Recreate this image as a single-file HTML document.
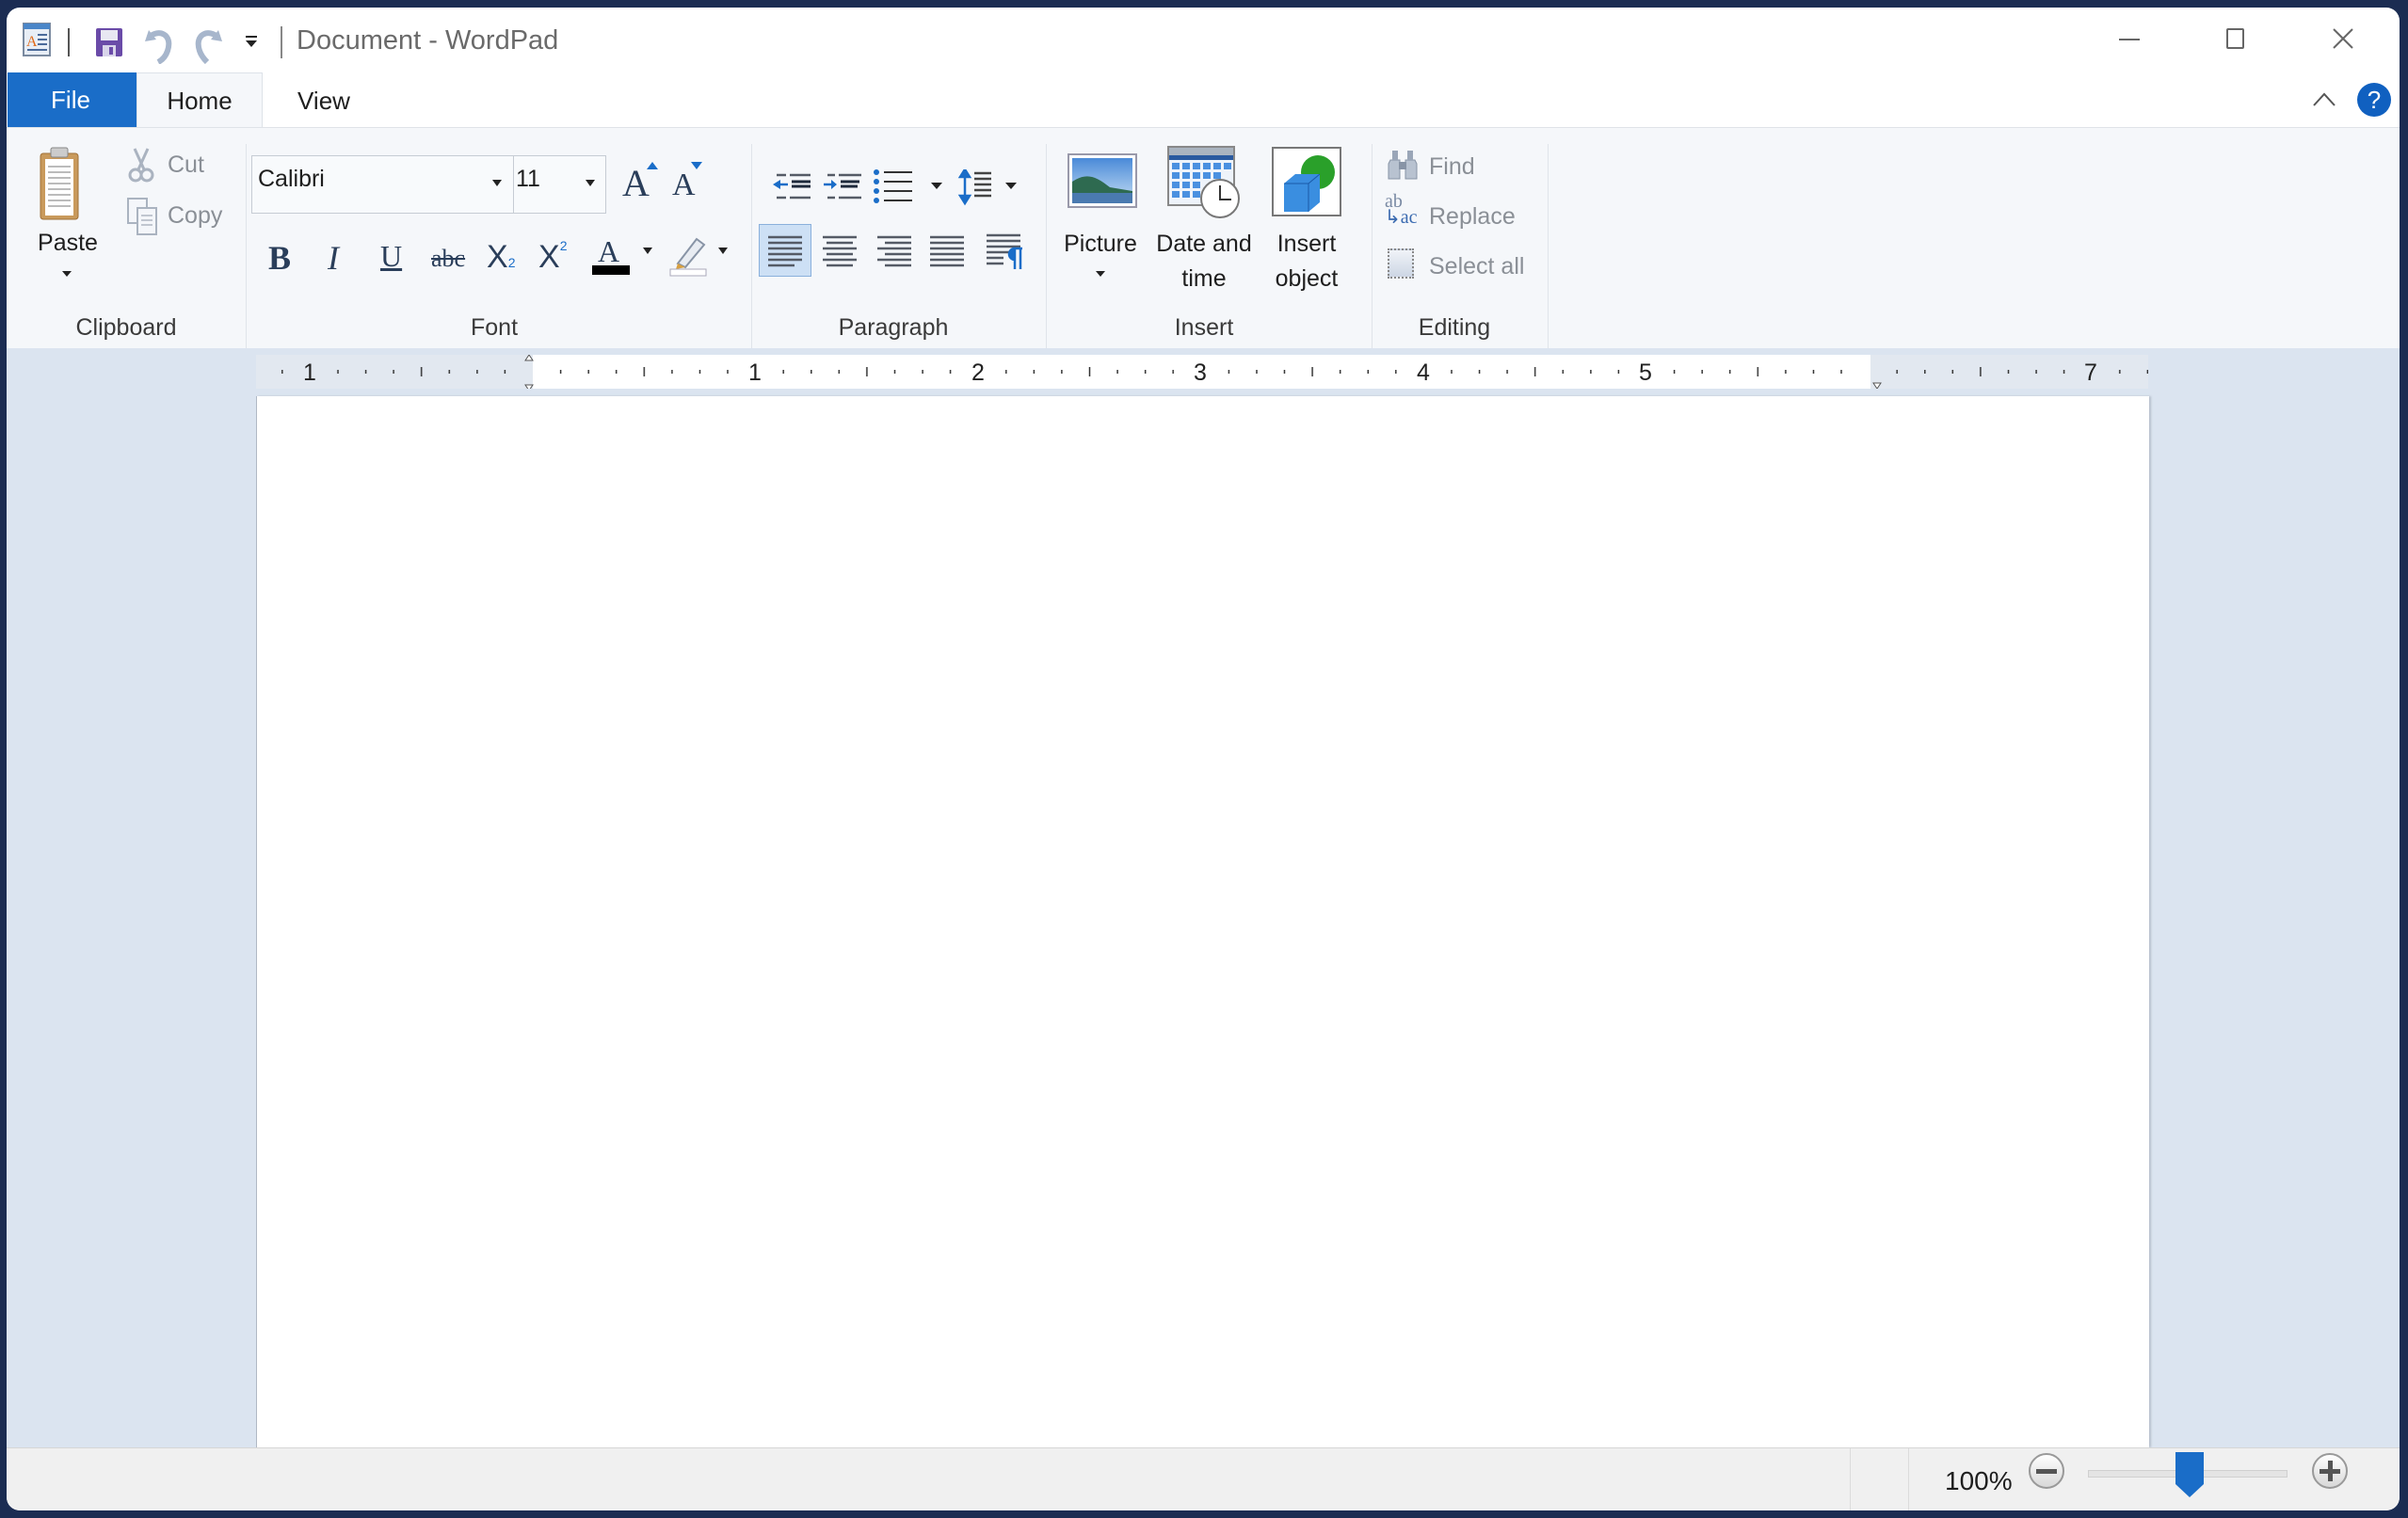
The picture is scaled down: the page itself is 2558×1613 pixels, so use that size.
<!DOCTYPE html>
<html><head><meta charset="utf-8"><style>
*{margin:0;padding:0;box-sizing:border-box}
body{width:2558px;height:1613px;background:#1b2c52;position:relative;overflow:hidden;font-family:"Liberation Sans",sans-serif;color:#1e1e1e}
.a{position:absolute}
.t{position:absolute;font-size:25px;white-space:nowrap;line-height:1}
.g{color:#8a8f96}
.lbl{position:absolute;font-size:25px;color:#3a3a3a;top:326px;transform:translateX(-50%);white-space:nowrap}
.sep{position:absolute;top:145px;width:1px;height:220px;background:#e0e4ea}
.dd{position:absolute;width:0;height:0;border-left:6px solid transparent;border-right:6px solid transparent;border-top:7px solid #222}
</style></head><body>
<div class="a" style="left:7px;top:8px;width:2542px;height:1597px;background:#fff;border-radius:14px;overflow:hidden">
<svg class="a" style="left:16px;top:15px" width="34" height="38" viewBox="0 0 34 38"><rect x="2" y="2" width="28" height="34" fill="#e8eef6" stroke="#7a8aa0" stroke-width="2"/><rect x="2" y="2" width="28" height="6" fill="#4a86c8"/><text x="5" y="26" font-size="16" fill="#e06a1a" font-family="Liberation Serif">A</text><path d="M17 14h10M17 19h10M17 24h10M6 30h21" stroke="#4a6a9a" stroke-width="2"/></svg>
<div class="a" style="left:65px;top:22px;width:2px;height:30px;background:#555"></div>
<svg class="a" style="left:94px;top:21px" width="30" height="32" viewBox="0 0 30 32"><rect x="1" y="1" width="28" height="30" rx="2" fill="#6a4ba8"/><rect x="6" y="3" width="18" height="11" fill="#e8e8f2"/><rect x="8" y="19" width="14" height="12" fill="#d8d4ea"/><rect x="15" y="21" width="4" height="8" fill="#6a4ba8"/></svg>
<svg class="a" style="left:143px;top:18px" width="36" height="42" viewBox="0 0 36 42"><path d="M8 6 L4 18 L16 16" fill="#a7b6cc"/><path d="M8 14 C18 4 34 10 28 28 C26 34 22 38 18 40" fill="none" stroke="#a7b6cc" stroke-width="6"/></svg>
<svg class="a" style="left:197px;top:18px" width="36" height="42" viewBox="0 0 36 42"><path d="M28 6 L32 18 L20 16" fill="#a7b6cc"/><path d="M28 14 C18 4 2 10 8 28 C10 34 14 38 16 40" fill="none" stroke="#a7b6cc" stroke-width="6"/></svg>
<div class="a" style="left:254px;top:30px;width:12px;height:2px;background:#222"></div>
<div class="dd" style="left:254px;top:35px"></div>
<div class="a" style="left:291px;top:20px;width:2px;height:34px;background:#888"></div>
<div class="t" style="left:308px;top:21px;font-size:29px;color:#6a6a6a">Document - WordPad</div>
<div class="a" style="left:2244px;top:33px;width:22px;height:2px;background:#666"></div>
<div class="a" style="left:2358px;top:22px;width:19px;height:22px;border:2px solid #666;border-radius:2px"></div>
<svg class="a" style="left:2470px;top:21px" width="24" height="24"><path d="M2 2L22 22M22 2L2 22" stroke="#666" stroke-width="2"/></svg>
<div class="a" style="left:1px;top:69px;width:137px;height:58px;background:#1a6dc8"></div>
<div class="t" style="left:68px;top:85px;color:#fff;font-size:26px;transform:translateX(-50%)">File</div>
<div class="a" style="left:138px;top:69px;width:134px;height:60px;background:#f5f7fa;border:1px solid #dde2e8;border-bottom:none"></div>
<div class="t" style="left:205px;top:86px;font-size:26px;transform:translateX(-50%)">Home</div>
<div class="t" style="left:337px;top:86px;font-size:26px;transform:translateX(-50%)">View</div>
<svg class="a" style="left:2449px;top:88px" width="26" height="18"><path d="M2 16L13 4L24 16" fill="none" stroke="#555" stroke-width="2"/></svg>
<div class="a" style="left:2497px;top:80px;width:36px;height:36px;border-radius:50%;background:#1060c0;color:#fff;font-size:26px;text-align:center;line-height:36px">?</div>
<div class="a" style="left:0;top:127px;width:2542px;height:236px;background:#f5f7fa;border-top:1px solid #dfe3e8"></div>
<div class="sep" style="left:254px"></div><div class="sep" style="left:791px"></div><div class="sep" style="left:1104px"></div><div class="sep" style="left:1450px"></div><div class="sep" style="left:1637px"></div>
<svg class="a" style="left:34px;top:147px" width="44" height="80" viewBox="0 0 44 80"><rect x="2" y="8" width="40" height="70" rx="3" fill="#c99a5c" stroke="#a07038"/><rect x="7" y="14" width="30" height="60" fill="#fff"/><path d="M10 22h24M10 28h24M10 34h24M10 40h24M10 46h24M10 52h24M10 58h24M10 64h24" stroke="#bbb" stroke-width="2"/><rect x="13" y="2" width="18" height="10" rx="2" fill="#ccc" stroke="#888"/></svg>
<div class="t" style="left:65px;top:238px;transform:translateX(-50%)">Paste</div>
<div class="dd" style="left:59px;top:280px;border-top-width:6px;border-left-width:5px;border-right-width:5px"></div>
<svg class="a" style="left:128px;top:148px" width="30" height="38" viewBox="0 0 30 38"><path d="M8 2L18 24M22 2L12 24" stroke="#aab3c0" stroke-width="3"/><circle cx="9" cy="30" r="6" fill="none" stroke="#aab3c0" stroke-width="3"/><circle cx="21" cy="30" r="6" fill="none" stroke="#aab3c0" stroke-width="3"/></svg>
<div class="t g" style="left:171px;top:155px">Cut</div>
<svg class="a" style="left:127px;top:201px" width="36" height="42" viewBox="0 0 36 42"><rect x="2" y="2" width="20" height="26" fill="#f4f6fa" stroke="#aab3c0" stroke-width="2"/><rect x="12" y="12" width="20" height="28" fill="#f4f6fa" stroke="#aab3c0" stroke-width="2"/><path d="M16 20h12M16 25h12M16 30h12" stroke="#c0c6d0" stroke-width="2"/></svg>
<div class="t g" style="left:171px;top:209px">Copy</div>
<div class="lbl" style="left:127px">Clipboard</div>
<div class="a" style="left:260px;top:157px;width:279px;height:62px;background:#f8fafc;border:1px solid #c6ccd4"></div>
<div class="a" style="left:538px;top:157px;width:99px;height:62px;background:#f8fafc;border:1px solid #c6ccd4"></div>
<div class="t" style="left:267px;top:170px">Calibri</div>
<div class="dd" style="left:516px;top:183px;border-left-width:5px;border-right-width:5px"></div>
<div class="t" style="left:541px;top:170px">11</div>
<div class="dd" style="left:615px;top:183px;border-left-width:5px;border-right-width:5px"></div>
<div class="t" style="left:654px;top:167px;font-size:40px;font-family:'Liberation Serif';color:#2a3e5a">A</div>
<div class="a" style="left:680px;top:164px;border-left:6px solid transparent;border-right:6px solid transparent;border-bottom:8px solid #1a6dc8"></div>
<div class="t" style="left:707px;top:172px;font-size:34px;font-family:'Liberation Serif';color:#2a3e5a">A</div>
<div class="a" style="left:727px;top:164px;border-left:6px solid transparent;border-right:6px solid transparent;border-top:8px solid #1a6dc8"></div>
<div class="t" style="left:278px;top:248px;font-size:36px;font-weight:bold;font-family:'Liberation Serif';color:#2a3e5a">B</div>
<div class="t" style="left:341px;top:248px;font-size:36px;font-style:italic;font-family:'Liberation Serif';color:#2a3e5a">I</div>
<div class="t" style="left:397px;top:248px;font-size:32px;font-family:'Liberation Serif';color:#2a3e5a;text-decoration:underline">U</div>
<div class="t" style="left:451px;top:254px;font-size:26px;font-family:'Liberation Serif';color:#2a3e5a;text-decoration:line-through">abc</div>
<div class="t" style="left:510px;top:248px;font-size:34px;color:#2a3e5a">X<span style="font-size:14px;color:#1a6dc8">2</span></div>
<div class="t" style="left:565px;top:246px;font-size:34px;color:#2a3e5a">X<span style="font-size:14px;color:#1a6dc8;vertical-align:18px">2</span></div>
<div class="t" style="left:628px;top:243px;font-size:32px;font-family:'Liberation Serif';color:#2a3e5a">A</div>
<div class="a" style="left:622px;top:274px;width:40px;height:10px;background:#000"></div>
<div class="dd" style="left:676px;top:255px;border-left-width:5px;border-right-width:5px"></div>
<svg class="a" style="left:703px;top:242px" width="42" height="44" viewBox="0 0 42 44"><path d="M10 30L30 4L38 10L18 34Z" fill="#e8ecf2" stroke="#8894a6" stroke-width="2"/><path d="M10 30L8 36L18 34" fill="#d8a040"/><rect x="2" y="36" width="38" height="7" fill="#fff" stroke="#aab"/></svg>
<div class="dd" style="left:756px;top:255px;border-left-width:5px;border-right-width:5px"></div>
<div class="lbl" style="left:518px">Font</div>
<svg class="a" style="left:812px;top:172px" width="300" height="40" viewBox="0 0 300 40">
<g stroke="#555b66" stroke-width="2.5"><path d="M6 6h10M20 6h22M6 30h10M20 30h22"/><path d="M22 13h20M22 18h20" stroke="#1e2a3c" stroke-width="3"/></g><path d="M2 16l8-5v10z" fill="#1a6dc8"/><path d="M8 16h10" stroke="#1a6dc8" stroke-width="2.5"/>
<g transform="translate(54 0)" stroke="#555b66" stroke-width="2.5"><path d="M6 6h8M18 6h24M6 30h8M18 30h24"/><path d="M20 13h20M20 18h18" stroke="#1e2a3c" stroke-width="3"/><path d="M2 16h10" stroke="#1a6dc8"/><path d="M16 16l-6-5v10z" fill="#1a6dc8" stroke="none"/></g>
<g transform="translate(108 0)"><circle cx="4" cy="3" r="3" fill="#1a6dc8"/><circle cx="4" cy="13" r="3" fill="#1a6dc8"/><circle cx="4" cy="23" r="3" fill="#1a6dc8"/><circle cx="4" cy="33" r="3" fill="#1a6dc8"/><path d="M12 3h30M12 13h30M12 23h30M12 33h30" stroke="#333" stroke-width="2"/></g>
<path d="M170 14h12l-6 7z" fill="#222"/>
<g transform="translate(200 0)"><path d="M6 0l-5 8h10zM6 36l-5-8h10z M6 6v24" fill="#1a6dc8" stroke="#1a6dc8" stroke-width="2.5"/><path d="M16 4h18M16 10h18M16 16h18M16 22h18M16 28h18" stroke="#444" stroke-width="2.5"/></g>
<path d="M249 14h12l-6 7z" fill="#222"/>
</svg>
<div class="a" style="left:799px;top:230px;width:56px;height:56px;background:#cde0f5;border:1px solid #8ab0dc"></div>
<svg class="a" style="left:805px;top:240px" width="290" height="40" viewBox="0 0 290 40"><g stroke="#555b66" stroke-width="2.6">
<path d="M4 4h36M4 10h36M4 16h36M4 22h36M4 28h36M4 34h28"/>
<path d="M62 4h36M66 10h28M62 16h36M66 22h28M62 28h36M66 34h28"/>
<path d="M120 4h36M128 10h28M120 16h36M128 22h28M120 28h36M128 34h28"/>
<path d="M176 4h36M176 10h36M176 16h36M176 22h36M176 28h36M176 34h36"/>
<path d="M236 2h36M236 8h36M236 14h36M236 20h24M236 26h18M236 32h18"/></g>
<path d="M266 16a6 6 0 1 0 0 12zM266 16v22M272 16v22M264 16h10" fill="#1a6dc8" stroke="#1a6dc8" stroke-width="2.5"/></svg>
<div class="lbl" style="left:942px">Paragraph</div>
<svg class="a" style="left:1127px;top:155px" width="74" height="58" viewBox="0 0 74 58"><rect x="1" y="1" width="72" height="56" fill="#fff" stroke="#99a" stroke-width="2"/><defs><linearGradient id="sk" x1="0" y1="0" x2="0" y2="1"><stop offset="0" stop-color="#4a8ad8"/><stop offset="1" stop-color="#c8e0f4"/></linearGradient></defs><rect x="5" y="5" width="64" height="48" fill="url(#sk)"/><path d="M5 30C20 20 30 24 45 36L69 40V53H5z" fill="#2e6a50"/><rect x="5" y="42" width="64" height="11" fill="#4a7ab0"/></svg>
<div class="t" style="left:1162px;top:239px;transform:translateX(-50%)">Picture</div>
<div class="dd" style="left:1157px;top:280px;border-top-width:6px;border-left-width:5px;border-right-width:5px"></div>
<svg class="a" style="left:1233px;top:147px" width="78" height="78" viewBox="0 0 78 78"><rect x="1" y="1" width="70" height="62" fill="#eef3fa" stroke="#888" stroke-width="2"/><rect x="2" y="2" width="68" height="8" fill="#aab4c0"/><rect x="2" y="10" width="68" height="5" fill="#2a5aa0"/><g fill="#4a90e0"><rect x="5" y="18" width="8" height="7"/><rect x="16" y="18" width="8" height="7"/><rect x="27" y="18" width="8" height="7"/><rect x="38" y="18" width="8" height="7"/><rect x="49" y="18" width="8" height="7"/><rect x="60" y="18" width="8" height="7"/><rect x="5" y="28" width="8" height="7"/><rect x="16" y="28" width="8" height="7"/><rect x="27" y="28" width="8" height="7"/><rect x="38" y="28" width="8" height="7"/><rect x="49" y="28" width="8" height="7"/><rect x="5" y="38" width="8" height="7"/><rect x="16" y="38" width="8" height="7"/><rect x="27" y="38" width="8" height="7"/><rect x="5" y="48" width="8" height="7"/><rect x="16" y="48" width="8" height="7"/><rect x="27" y="48" width="8" height="7"/></g><circle cx="56" cy="56" r="20" fill="#fff" stroke="#777" stroke-width="2"/><path d="M56 42v15h12" stroke="#333" stroke-width="2" fill="none"/></svg>
<div class="t" style="left:1272px;top:239px;transform:translateX(-50%)">Date and</div>
<div class="t" style="left:1272px;top:276px;transform:translateX(-50%)">time</div>
<svg class="a" style="left:1343px;top:147px" width="78" height="78" viewBox="0 0 78 78"><rect x="2" y="2" width="72" height="72" fill="#fff" stroke="#777" stroke-width="2"/><circle cx="50" cy="28" r="18" fill="#2aa02a"/><path d="M14 40l12-10h26v30l-12 10H14z" fill="#3a8ee0"/><path d="M14 40h26v30M40 40l12-10" stroke="#1a5aa8" fill="none"/></svg>
<div class="t" style="left:1381px;top:239px;transform:translateX(-50%)">Insert</div>
<div class="t" style="left:1381px;top:276px;transform:translateX(-50%)">object</div>
<div class="lbl" style="left:1272px">Insert</div>
<svg class="a" style="left:1466px;top:150px" width="34" height="34" viewBox="0 0 34 34"><path d="M4 12h10v20H2V16zM20 12h10l2 4v16H20z" fill="#b8c2d0" stroke="#8894a6"/><rect x="6" y="2" width="6" height="10" fill="#9aa6b8"/><rect x="22" y="2" width="6" height="10" fill="#9aa6b8"/><rect x="13" y="14" width="8" height="8" fill="#8894a6"/></svg>
<div class="t g" style="left:1511px;top:157px">Find</div>
<div class="t" style="left:1464px;top:198px;font-size:20px;font-family:'Liberation Serif';color:#7a8aa4;line-height:0.85">ab<br><span style="color:#3a6ab0">&#8627;ac</span></div>
<div class="t g" style="left:1511px;top:210px">Replace</div>
<div class="a" style="left:1467px;top:256px;width:28px;height:32px;background:linear-gradient(#f0f3f8,#cdd6e4);border:2px dotted #888"></div>
<div class="t g" style="left:1511px;top:263px">Select all</div>
<div class="lbl" style="left:1538px">Editing</div>
<div class="a" style="left:0;top:362px;width:2542px;height:1168px;background:#dbe4f0"></div>
<div class="a" style="left:265px;top:369px;width:2010px;height:36px;background:#e2e8f0"></div>
<div class="a" style="left:559px;top:369px;width:1421px;height:36px;background:#fff"></div>
<svg class="a" style="left:265px;top:369px" width="2010" height="36">
<defs><pattern id="rt" x="294" y="0" width="236.6" height="36" patternUnits="userSpaceOnUse"><g stroke="#333" stroke-width="1.5"><path d="M29.6 16v4M59.2 16v4M88.7 16v4M147.9 16v4M177.5 16v4M207 16v4"/><path d="M118.3 13v10"/></g></pattern></defs>
<rect x="0" y="0" width="2010" height="36" fill="url(#rt)"/>
<rect x="54" y="8" width="22" height="22" fill="#e2e8f0"/>
<g font-size="25" fill="#222" font-family="Liberation Sans" text-anchor="middle"><text x="57" y="27">1</text><text x="530" y="27">1</text><text x="767" y="27">2</text><text x="1003" y="27">3</text><text x="1240" y="27">4</text><text x="1476" y="27">5</text><text x="1949" y="27">7</text></g>
<path d="M290 0l-4 6h8zM290 38l-4-6h8z" fill="#fff" stroke="#555"/>
<path d="M1722 36l-4-6h8z" fill="#fff" stroke="#555"/>
</svg>
<div class="a" style="left:265px;top:413px;width:2011px;height:1117px;background:#fff;border-left:1px solid #b0b8c4;box-shadow:2px 0 2px #b8c0cc"></div>
<div class="a" style="left:0;top:1530px;width:2542px;height:67px;background:#f0f0f0;border-top:1px solid #d6d6d6"></div>
<div class="a" style="left:1958px;top:1531px;width:1px;height:66px;background:#dcdcdc"></div>
<div class="a" style="left:2020px;top:1531px;width:1px;height:66px;background:#dcdcdc"></div>
<div class="t" style="left:2059px;top:1552px;font-size:28px">100%</div>
<div class="a" style="left:2148px;top:1536px;width:38px;height:38px;border-radius:50%;background:linear-gradient(#fff,#d8d8d8);border:2px solid #999"></div>
<div class="a" style="left:2156px;top:1553px;width:22px;height:5px;background:#555"></div>
<div class="a" style="left:2211px;top:1554px;width:212px;height:8px;background:#e4e4e4;border:1px solid #d0d0d0"></div>
<svg class="a" style="left:2304px;top:1535px" width="30" height="48"><path d="M0 0h30v34l-15 14l-15-14z" fill="#1a6dc8"/></svg>
<div class="a" style="left:2449px;top:1536px;width:38px;height:38px;border-radius:50%;background:linear-gradient(#fff,#d8d8d8);border:2px solid #999"></div>
<div class="a" style="left:2457px;top:1553px;width:22px;height:5px;background:#555"></div>
<div class="a" style="left:2466px;top:1544px;width:5px;height:22px;background:#555"></div>
</div>
</body></html>
